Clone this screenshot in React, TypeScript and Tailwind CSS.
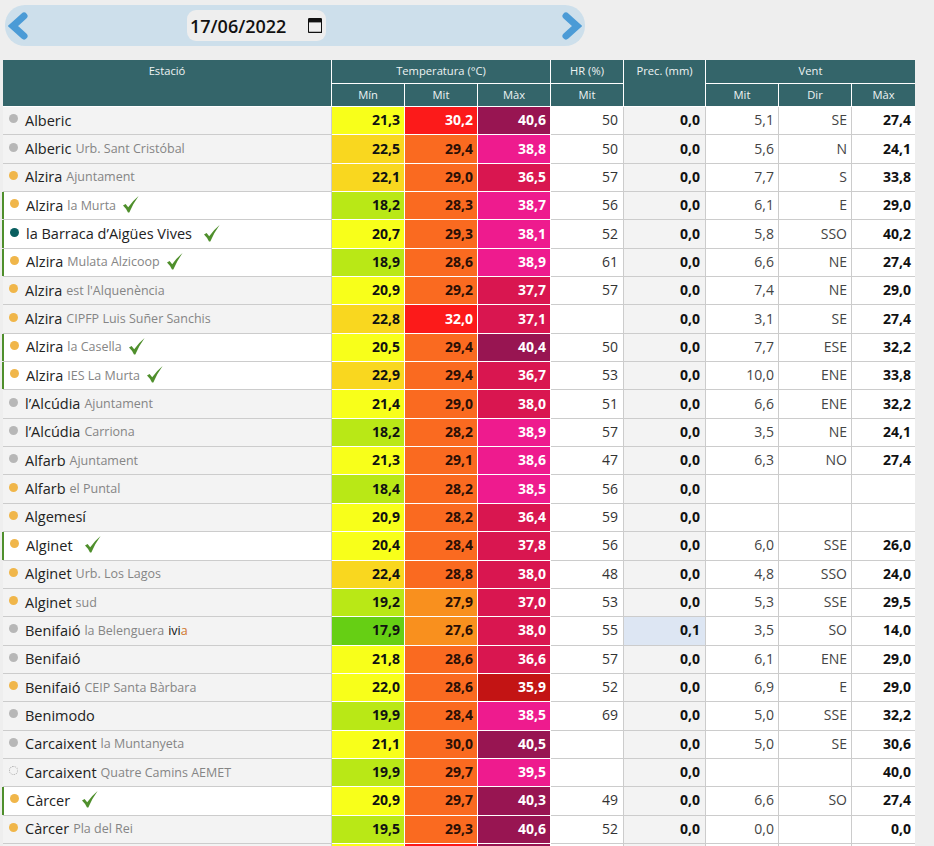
const FONT = "font-['Open_Sans',sans-serif]";

type Row = {
  name: string;
  sub?: string;
  dot: 'g' | 'a' | 't' | 'd';
  ok?: boolean;
  ivia?: boolean;
  gap?: string;
  t: [string, string, string];
  hr: string;
  p: string;
  v: [string, string, string];
};

const rows: Row[] = [
  { name: 'Alberic', dot: 'g', t: ['21,3', '30,2', '40,6'], hr: '50', p: '0,0', v: ['5,1', 'SE', '27,4'] },
  { name: 'Alberic', sub: 'Urb. Sant Cristóbal', dot: 'g', t: ['22,5', '29,4', '38,8'], hr: '50', p: '0,0', v: ['5,6', 'N', '24,1'] },
  { name: 'Alzira', sub: 'Ajuntament', dot: 'a', t: ['22,1', '29,0', '36,5'], hr: '57', p: '0,0', v: ['7,7', 'S', '33,8'] },
  { name: 'Alzira', sub: 'la Murta', dot: 'a', ok: true, t: ['18,2', '28,3', '38,7'], hr: '56', p: '0,0', v: ['6,1', 'E', '29,0'] },
  { name: 'la Barraca d’Aigües Vives', dot: 't', ok: true, gap: 'ml-3', t: ['20,7', '29,3', '38,1'], hr: '52', p: '0,0', v: ['5,8', 'SSO', '40,2'] },
  { name: 'Alzira', sub: 'Mulata Alzicoop', dot: 'a', ok: true, t: ['18,9', '28,6', '38,9'], hr: '61', p: '0,0', v: ['6,6', 'NE', '27,4'] },
  { name: 'Alzira', sub: "est l'Alquenència", dot: 'a', t: ['20,9', '29,2', '37,7'], hr: '57', p: '0,0', v: ['7,4', 'NE', '29,0'] },
  { name: 'Alzira', sub: 'CIPFP Luis Suñer Sanchis', dot: 'a', t: ['22,8', '32,0', '37,1'], hr: '', p: '0,0', v: ['3,1', 'SE', '27,4'] },
  { name: 'Alzira', sub: 'la Casella', dot: 'a', ok: true, t: ['20,5', '29,4', '40,4'], hr: '50', p: '0,0', v: ['7,7', 'ESE', '32,2'] },
  { name: 'Alzira', sub: 'IES La Murta', dot: 'a', ok: true, t: ['22,9', '29,4', '36,7'], hr: '53', p: '0,0', v: ['10,0', 'ENE', '33,8'] },
  { name: 'l’Alcúdia', sub: 'Ajuntament', dot: 'g', t: ['21,4', '29,0', '38,0'], hr: '51', p: '0,0', v: ['6,6', 'ENE', '32,2'] },
  { name: 'l’Alcúdia', sub: 'Carriona', dot: 'g', t: ['18,2', '28,2', '38,9'], hr: '57', p: '0,0', v: ['3,5', 'NE', '24,1'] },
  { name: 'Alfarb', sub: 'Ajuntament', dot: 'g', t: ['21,3', '29,1', '38,6'], hr: '47', p: '0,0', v: ['6,3', 'NO', '27,4'] },
  { name: 'Alfarb', sub: 'el Puntal', dot: 'a', t: ['18,4', '28,2', '38,5'], hr: '56', p: '0,0', v: ['', '', ''] },
  { name: 'Algemesí', dot: 'a', t: ['20,9', '28,2', '36,4'], hr: '59', p: '0,0', v: ['', '', ''] },
  { name: 'Alginet', dot: 'a', ok: true, gap: 'ml-3', t: ['20,4', '28,4', '37,8'], hr: '56', p: '0,0', v: ['6,0', 'SSE', '26,0'] },
  { name: 'Alginet', sub: 'Urb. Los Lagos', dot: 'a', t: ['22,4', '28,8', '38,0'], hr: '48', p: '0,0', v: ['4,8', 'SSO', '24,0'] },
  { name: 'Alginet', sub: 'sud', dot: 'a', t: ['19,2', '27,9', '37,0'], hr: '53', p: '0,0', v: ['5,3', 'SSE', '29,5'] },
  { name: 'Benifaió', sub: 'la Belenguera', ivia: true, dot: 'g', t: ['17,9', '27,6', '38,0'], hr: '55', p: '0,1', v: ['3,5', 'SO', '14,0'] },
  { name: 'Benifaió', dot: 'g', t: ['21,8', '28,6', '36,6'], hr: '57', p: '0,0', v: ['6,1', 'ENE', '29,0'] },
  { name: 'Benifaió', sub: 'CEIP Santa Bàrbara', dot: 'a', t: ['22,0', '28,6', '35,9'], hr: '52', p: '0,0', v: ['6,9', 'E', '29,0'] },
  { name: 'Benimodo', dot: 'g', t: ['19,9', '28,4', '38,5'], hr: '69', p: '0,0', v: ['5,0', 'SSE', '32,2'] },
  { name: 'Carcaixent', sub: 'la Muntanyeta', dot: 'g', t: ['21,1', '30,0', '40,5'], hr: '', p: '0,0', v: ['5,0', 'SE', '30,6'] },
  { name: 'Carcaixent', sub: 'Quatre Camins AEMET', dot: 'd', t: ['19,9', '29,7', '39,5'], hr: '', p: '0,0', v: ['', '', '40,0'] },
  { name: 'Càrcer', dot: 'a', ok: true, gap: 'ml-3', t: ['20,9', '29,7', '40,3'], hr: '49', p: '0,0', v: ['6,6', 'SO', '27,4'] },
  { name: 'Càrcer', sub: 'Pla del Rei', dot: 'a', t: ['19,5', '29,3', '40,6'], hr: '52', p: '0,0', v: ['0,0', '', '0,0'] },
];

const num = (s: string) => parseFloat(s.replace(',', '.'));

const minColor = (n: number) =>
  n < 18 ? 'bg-[#66cf14]' : n < 20 ? 'bg-[#b9e816]' : n <= 22 ? 'bg-[#f8ff1a]' : 'bg-[#f9d71f]';
const midColor = (n: number) =>
  n < 28 ? 'bg-[#f9901e]' : n <= 30 ? 'bg-[#fa6a20]' : 'bg-[#fc1a1a]';
const maxColor = (n: number) =>
  n < 36 ? 'bg-[#c31414]' : n <= 38 ? 'bg-[#d91650]' : n < 40 ? 'bg-[#ee1b8e]' : 'bg-[#981552]';

const dots = {
  g: 'bg-[#b7b7b7]',
  a: 'bg-[#f0b64a]',
  t: 'bg-[#0a5f60]',
  d: 'border border-dotted border-[#aaaaaa] bg-transparent',
};

function Check({ className = '' }: { className?: string }) {
  return (
    <svg viewBox="0 0 16 17" className={`w-[16px] h-[17px] shrink-0 ${className}`}>
      <path d="M0 9.6 L2.6 8 L5.2 11.2 Q9.5 5 15.6 0 Q10.4 7 6.3 16.5 L5 16.5 Q3 12.4 0 9.6Z" fill="#4f8f2c" />
    </svg>
  );
}

function Chevron({ right = false }: { right?: boolean }) {
  return (
    <svg viewBox="0 0 20 28" className="w-[20px] h-[28px]">
      <polyline
        points={right ? '4,4 15,14 4,24' : '16,4 5,14 16,24'}
        fill="none"
        stroke="#4b9bd6"
        strokeWidth="7"
        strokeLinecap="round"
        strokeLinejoin="miter"
      />
    </svg>
  );
}

function CalendarIcon() {
  return (
    <svg viewBox="0 0 14 15" className="w-[14px] h-[15px]">
      <path
        d="M1.3 0.8h11.4a1 1 0 0 1 1 1v11.6a1 1 0 0 1-1 1H1.3a1 1 0 0 1-1-1V1.800a1 1 0 0 1 1-1Z"
        fill="none"
        stroke="#111"
        strokeWidth="1.400"
      />
      <rect x="0.500" y="1" width="13" height="3.400" fill="#111" />
    </svg>
  );
}

const headCell = 'bg-[#34656a] text-[#eef3f3] text-[11.200px] font-normal border-r border-b border-white p-0 text-center';
const tempCell = 'border-r border-b border-white text-right pr-[4px] pb-[2px] text-[14px] font-bold';
const dataCell = 'border-r border-b border-[#cccccc] text-right pb-[2px] text-[14px]';

export default function App() {
  return (
    <div className={`h-[846px] overflow-hidden bg-[#eeeeee] text-[#222222] ${FONT}`}>
      <div className="pt-[5px] pl-[5px]">
        <div className="w-[580px] h-[41px] rounded-[20px] bg-[#cddfeb] flex items-center justify-between pl-[3px] pr-[3px]">
          <Chevron />
          <div className="flex-1 pl-[159px]">
            <div className="w-[139px] h-[31px] rounded-[9px] bg-[#eeeeee] flex items-center justify-between pl-[3px] pr-[4px]">
              <span className="text-[18px] font-semibold text-[#111111] pt-[1px]">17/06/2022</span>
              <CalendarIcon />
            </div>
          </div>
          <Chevron right />
        </div>
      </div>

      <table className="mt-[14px] ml-[3px] w-[912px] table-fixed border-separate border-spacing-0">
        <colgroup>
          <col className="w-[329px]" />
          <col className="w-[73px]" />
          <col className="w-[73px]" />
          <col className="w-[73px]" />
          <col className="w-[73px]" />
          <col className="w-[82px]" />
          <col className="w-[73px]" />
          <col className="w-[73px]" />
          <col className="w-[63px]" />
        </colgroup>
        <thead>
          <tr className="h-[24px]">
            <th rowSpan={2} className={`${headCell} align-top pt-[3px]`}>Estació</th>
            <th colSpan={3} className={headCell}>Temperatura (°C)</th>
            <th className={headCell}>HR (%)</th>
            <th rowSpan={2} className={`${headCell} align-top pt-[3px]`}>Prec. (mm)</th>
            <th colSpan={3} className={`${headCell} border-r-0`}>Vent</th>
          </tr>
          <tr className="h-[23px]">
            <th className={headCell}>Mín</th>
            <th className={headCell}>Mit</th>
            <th className={headCell}>Màx</th>
            <th className={headCell}>Mit</th>
            <th className={headCell}>Mit</th>
            <th className={headCell}>Dir</th>
            <th className={`${headCell} border-r-0`}>Màx</th>
          </tr>
        </thead>
        <tbody>
          {rows.map((r, i) => (
            <tr key={i} className="h-[28.35px]">
              <td className={`relative p-0 border-r border-b border-[#cccccc] ${r.ok ? 'bg-white' : 'bg-[#f3f3f3]'}`}>
                {r.ok && <span className="absolute left-[-1px] top-0 bottom-0 w-[2px] bg-[#4f8f2c]" />}
                <div className={`flex items-center whitespace-nowrap leading-[20px] ${r.ok ? 'pl-[7px]' : 'pl-[6px]'}`}>
                  <span className={`w-[9px] h-[9px] rounded-full shrink-0 -mt-[4px] ${dots[r.dot]}`} />
                  <span className="ml-[7px] text-[14.500px] text-[#222222]">{r.name}</span>
                  {r.sub && <span className="ml-[4px] text-[12.500px] text-[#858585]">{r.sub}</span>}
                  {r.ivia && (
                    <span className="ml-[4px] text-[12.500px] text-[#111111]">
                      ivi<span className="text-[#d0762c]">a</span>
                    </span>
                  )}
                  {r.ok && <Check className={`-mt-[2px] ${r.gap ?? 'ml-[7px]'}`} />}
                </div>
              </td>
              <td className={`${tempCell} ${minColor(num(r.t[0]))} text-[#111111]`}>{r.t[0]}</td>
              <td className={`${tempCell} ${midColor(num(r.t[1]))} ${num(r.t[1]) > 30 ? 'text-white' : 'text-[#2a0f05]'}`}>{r.t[1]}</td>
              <td className={`${tempCell} ${maxColor(num(r.t[2]))} text-white`}>{r.t[2]}</td>
              <td className={`${dataCell} pr-[5px] bg-white text-[#333333]`}>{r.hr}</td>
              <td className={`${dataCell} pr-[5px] font-bold text-[#111111] ${r.p === '0,0' ? 'bg-[#f3f3f3]' : 'bg-[#dde6f3]'}`}>{r.p}</td>
              <td className={`${dataCell} pr-[4px] bg-white text-[#444444]`}>{r.v[0]}</td>
              <td className={`${dataCell} pr-[4px] bg-white text-[#444444]`}>{r.v[1]}</td>
              <td className={`${dataCell} pr-[4px] border-r-0 bg-white font-bold text-[#111111]`}>{r.v[2]}</td>
            </tr>
          ))}
          <tr className="h-[28.35px]">
            <td className="border-r border-[#cccccc] bg-[#f3f3f3]" />
            <td className="border-r border-white bg-[#f8ff1a]" />
            <td className="border-r border-white bg-[#fc1a1a]" />
            <td className="border-r border-white bg-[#981552]" />
            <td className="border-r border-[#cccccc] bg-white" />
            <td className="border-r border-[#cccccc] bg-[#f3f3f3]" />
            <td className="border-r border-[#cccccc] bg-white" />
            <td className="border-r border-[#cccccc] bg-white" />
            <td className="bg-white" />
          </tr>
        </tbody>
      </table>
    </div>
  );
}
